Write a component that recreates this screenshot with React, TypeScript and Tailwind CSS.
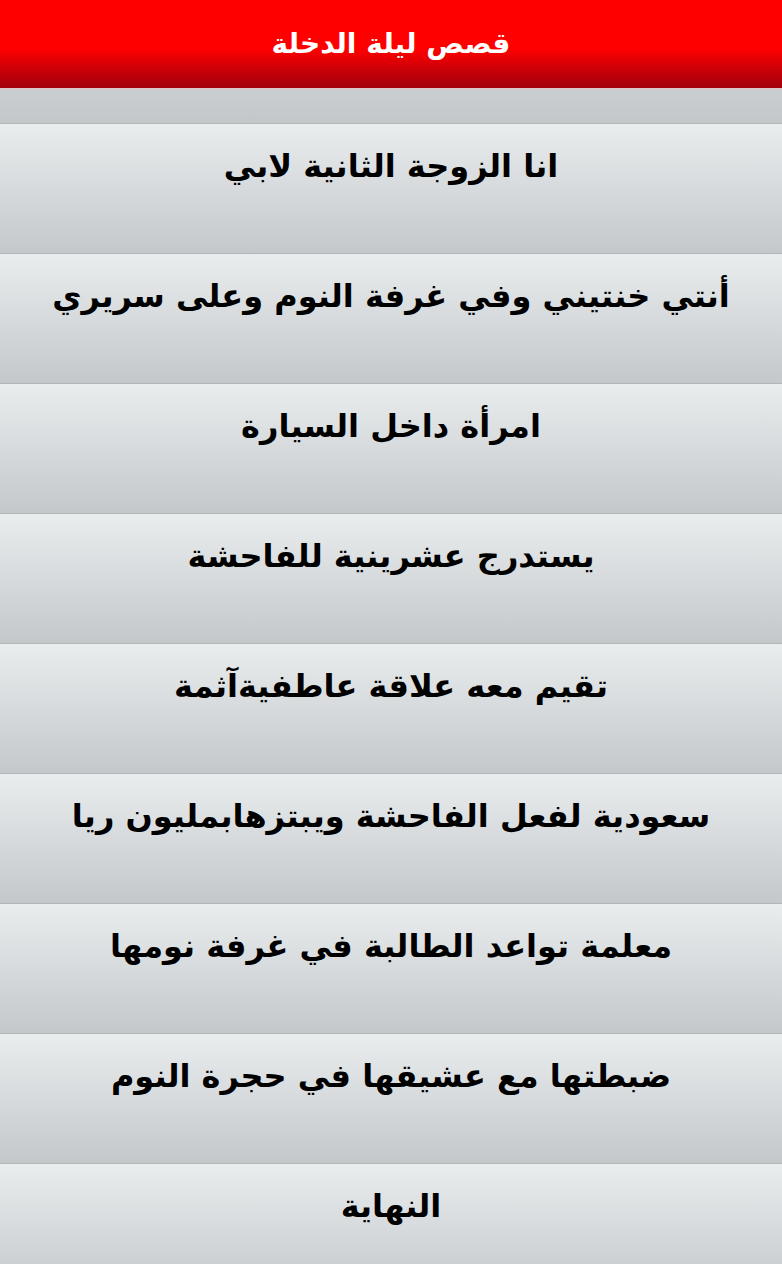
import React from 'react';

const stories = [
  'انا الزوجة الثانية لابي',
  'أنتي خنتيني وفي غرفة النوم وعلى سريري',
  'امرأة داخل السيارة',
  'يستدرج عشرينية للفاحشة',
  'تقيم معه علاقة عاطفيةآثمة',
  'سعودية لفعل الفاحشة ويبتزهابمليون ريا',
  'معلمة تواعد الطالبة في غرفة نومها',
  'ضبطتها مع عشيقها في حجرة النوم',
  'النهاية',
];

const StoryRow = ({ title }: { title: string }) => (
  <div className="h-[130px] shrink-0 border-b border-[#b2b5b8] bg-gradient-to-b from-[#e9edee] to-[#c4c8cb] pt-[14px] text-center">
    <span className="text-[32px] font-bold leading-[56px] text-black">{title}</span>
  </div>
);

export default function App() {
  return (
    <div
      dir="rtl"
      className="flex h-[1264px] w-[782px] flex-col overflow-hidden bg-[#c4c8cb]"
      style={{ fontFamily: '"DejaVu Sans", sans-serif' }}
    >
      <header className="flex h-[90px] shrink-0 items-center justify-center border-b-2 border-[#d9c7c8] bg-gradient-to-b from-[#ff0000] from-55% to-[#a0000a]">
        <h1 className="text-[28px] font-bold text-white">قصص ليلة الدخلة</h1>
      </header>
      <div className="h-[34px] shrink-0 border-b border-[#b2b5b8] bg-gradient-to-b from-[#c9ced1] to-[#c3c7ca]" />
      {stories.map((s, i) => (
        <StoryRow key={i} title={s} />
      ))}
    </div>
  );
}
